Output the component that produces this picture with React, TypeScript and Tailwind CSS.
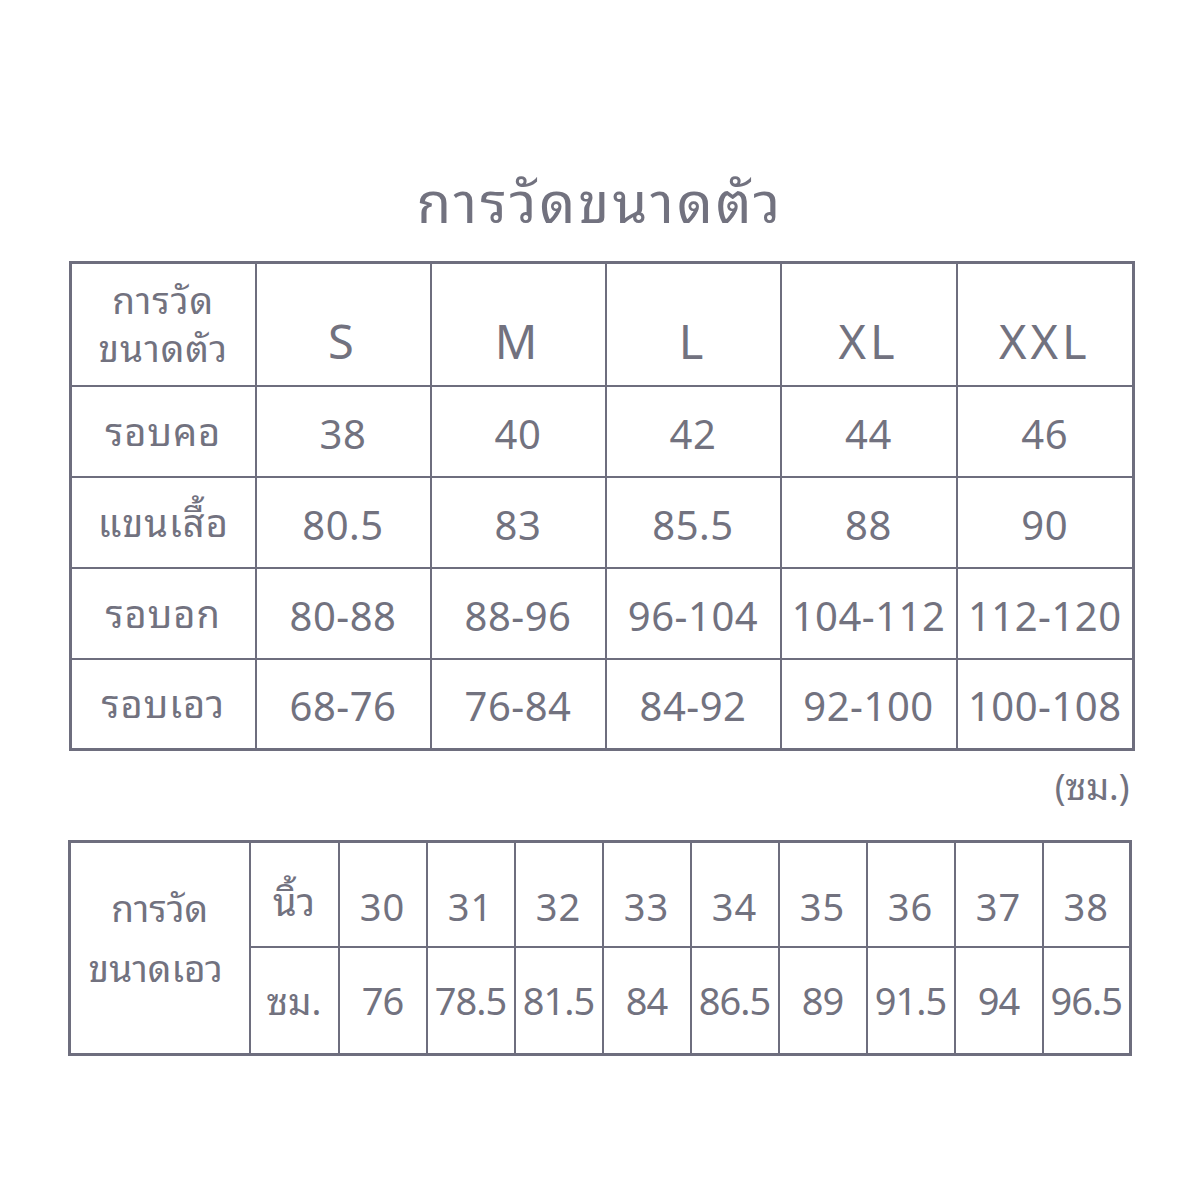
import React from 'react';

const sizes = ['S', 'M', 'L', 'XL', 'XXL'];

const bodyRows = [
  { label: 'รอบคอ', values: ['38', '40', '42', '44', '46'] },
  { label: 'แขนเสื้อ', values: ['80.5', '83', '85.5', '88', '90'] },
  { label: 'รอบอก', values: ['80-88', '88-96', '96-104', '104-112', '112-120'] },
  { label: 'รอบเอว', values: ['68-76', '76-84', '84-92', '92-100', '100-108'] },
];

const inches = ['30', '31', '32', '33', '34', '35', '36', '37', '38'];
const cms = ['76', '78.5', '81.5', '84', '86.5', '89', '91.5', '94', '96.5'];

const cell = 'border-2 border-[#6e6e7e] text-center align-middle p-0 whitespace-nowrap';

export default function App() {
  return (
    <div
      className="w-[1200px] h-[1200px] bg-white text-[#72727f] flex flex-col items-center"
      style={{ fontFamily: '"Noto Sans", "Noto Sans Thai Looped", "Noto Serif Thai", "Loma", "Garuda", "Noto Sans Thai", sans-serif' }}
    >
      <h1 className="mt-[165px] text-[56px] leading-[72px] font-normal tracking-[3px]">การวัดขนาดตัว</h1>

      {/* body size chart */}
      <table className="mt-[24px] ml-[4px] border-collapse border-[3px] border-[#6e6e7e] table-fixed w-[1063px]">
        <colgroup>
          <col className="w-[185px]" />
          <col className="w-[175px]" />
          <col className="w-[175px]" />
          <col className="w-[175px]" />
          <col className="w-[176px]" />
          <col className="w-[177px]" />
        </colgroup>
        <tbody>
          <tr className="h-[123px]">
            <td className={`${cell} text-[37px] leading-[48px] tracking-[1px]`}>
              <div>การวัด</div>
              <div>ขนาดตัว</div>
            </td>
            {sizes.map((s) => (
              <td key={s} className={`${cell} text-[47px] pt-[34px] tracking-[4px]`}>{s}</td>
            ))}
          </tr>
          {bodyRows.map((row) => (
            <tr key={row.label} className="h-[91px]">
              <td className={`${cell} text-[38px] tracking-[1px]`}>{row.label}</td>
              {row.values.map((v, i) => (
                <td key={i} className={`${cell} text-[40px] pt-[5px] tracking-[0.5px]`}>{v}</td>
              ))}
            </tr>
          ))}
        </tbody>
      </table>

      <div className="w-[1063px] ml-[4px] flex justify-end pr-[4px] mt-[8px] text-[36px] leading-[56px]">(ซม.)</div>

      {/* waist chart */}
      <table className="mt-[25px] border-collapse border-[3px] border-[#6e6e7e] table-fixed w-[1064px]">
        <colgroup>
          <col className="w-[180px]" />
          <col className="w-[89px]" />
          {inches.map((n) => (
            <col key={n} className="w-[88px]" />
          ))}
        </colgroup>
        <tbody>
          <tr className="h-[105px]">
            <td rowSpan={2} className={`${cell} text-[37px] leading-[60px] pb-[20px]`}>
              <div>การวัด</div>
              <div className="-ml-[8px]">ขนาดเอว</div>
            </td>
            <td className={`${cell} text-[38px] pt-[14px]`}>นิ้ว</td>
            {inches.map((n) => (
              <td key={n} className={`${cell} text-[38px] pt-[24px] tracking-[1px]`}>{n}</td>
            ))}
          </tr>
          <tr className="h-[108px]">
            <td className={`${cell} text-[37px]`}>ซม.</td>
            {cms.map((n) => (
              <td key={n} className={`${cell} text-[38px] tracking-[-1px]`}>{n}</td>
            ))}
          </tr>
        </tbody>
      </table>
    </div>
  );
}
